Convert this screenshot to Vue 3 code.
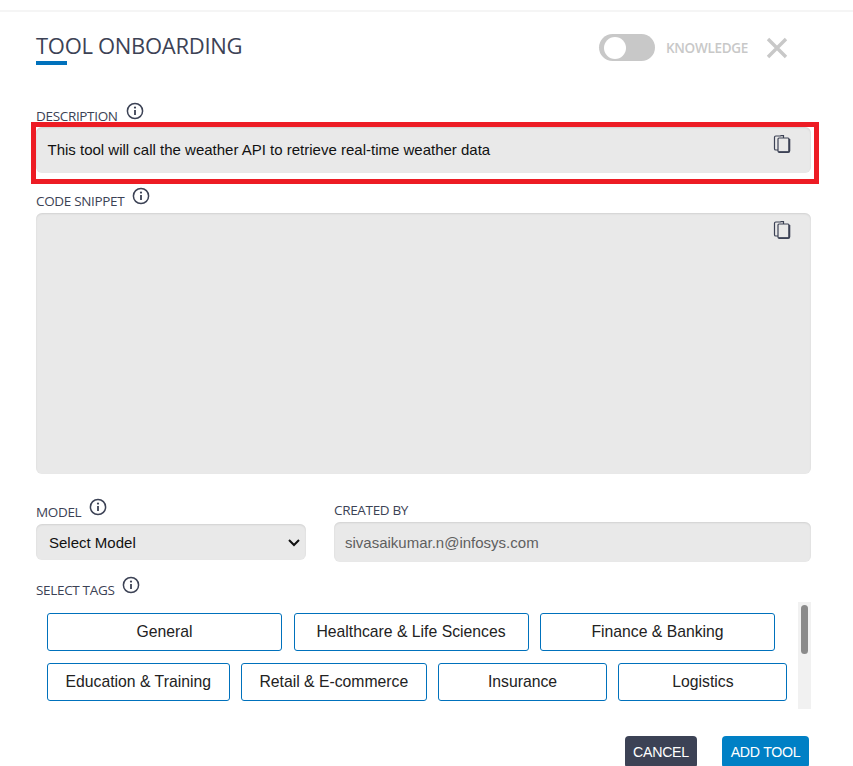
<template>
  <div class="modal">
    <div class="head">
      <h2 class="title">TOOL ONBOARDING</h2>
      <div class="head-right">
        <span class="toggle"><span class="knob"></span></span>
        <span class="knowledge">KNOWLEDGE</span>
        <svg class="close" width="22" height="22" viewBox="0 0 22 22">
          <path d="M2 2 L20 20 M20 2 L2 20" stroke="#c8c8c8" stroke-width="3.4" fill="none" />
        </svg>
      </div>
    </div>

    <div class="label-row desc-label">
      <span class="label">DESCRIPTION</span>
      <svg class="info" width="18" height="18" viewBox="0 0 18 18">
        <circle cx="9" cy="9" r="7.6" fill="none" stroke="#3c4255" stroke-width="1.5" />
        <rect x="8.1" y="8" width="1.8" height="5" fill="#3c4255" />
        <circle cx="9" cy="5.6" r="1.1" fill="#3c4255" />
      </svg>
    </div>
    <div class="desc-wrap">
      <div class="area desc">
        This tool will call the weather API to retrieve real-time weather data
        <svg class="copy" width="18" height="21" viewBox="0 0 18 21">
          <path d="M5 17 H2.8 Q1.5 17 1.5 15.7 V4.3 Q1.5 3 2.8 3 H8 M7.5 2.6 H10.5 V5" fill="none" stroke="#3c4255" stroke-width="1.2" />
          <rect x="5" y="5" width="11" height="14" rx="1" fill="none" stroke="#3c4255" stroke-width="1.2" />
          <path d="M5.5 19.2 H15 Q16.4 19.2 16.4 17.8 V6" fill="none" stroke="#3c4255" stroke-width="1.8" />
        </svg>
      </div>
      <div class="highlight"></div>
    </div>

    <div class="label-row code-label">
      <span class="label">CODE SNIPPET</span>
      <svg class="info" width="18" height="18" viewBox="0 0 18 18">
        <circle cx="9" cy="9" r="7.6" fill="none" stroke="#3c4255" stroke-width="1.5" />
        <rect x="8.1" y="8" width="1.8" height="5" fill="#3c4255" />
        <circle cx="9" cy="5.6" r="1.1" fill="#3c4255" />
      </svg>
    </div>
    <div class="area code">
      <svg class="copy" width="18" height="21" viewBox="0 0 18 21">
        <path d="M5 17 H2.8 Q1.5 17 1.5 15.7 V4.3 Q1.5 3 2.8 3 H8 M7.5 2.6 H10.5 V5" fill="none" stroke="#3c4255" stroke-width="1.2" />
        <rect x="5" y="5" width="11" height="14" rx="1" fill="none" stroke="#3c4255" stroke-width="1.2" />
        <path d="M5.5 19.2 H15 Q16.4 19.2 16.4 17.8 V6" fill="none" stroke="#3c4255" stroke-width="1.8" />
      </svg>
    </div>

    <div class="two-col">
      <div class="col-model">
        <div class="label-row model-label">
          <span class="label">MODEL</span>
          <svg class="info" width="18" height="18" viewBox="0 0 18 18">
            <circle cx="9" cy="9" r="7.6" fill="none" stroke="#3c4255" stroke-width="1.5" />
            <rect x="8.1" y="8" width="1.8" height="5" fill="#3c4255" />
            <circle cx="9" cy="5.6" r="1.1" fill="#3c4255" />
          </svg>
        </div>
        <div class="select">
          <span>Select Model</span>
          <svg width="14" height="9" viewBox="0 0 14 9">
            <path d="M2 2 L7 7 L12 2" fill="none" stroke="#111" stroke-width="2" />
          </svg>
        </div>
      </div>
      <div class="col-created">
        <div class="label created-label">CREATED BY</div>
        <div class="input">sivasaikumar.n@infosys.com</div>
      </div>
    </div>

    <div class="label-row tags-label">
      <span class="label">SELECT TAGS</span>
      <svg class="info" width="18" height="18" viewBox="0 0 18 18">
        <circle cx="9" cy="9" r="7.6" fill="none" stroke="#3c4255" stroke-width="1.5" />
        <rect x="8.1" y="8" width="1.8" height="5" fill="#3c4255" />
        <circle cx="9" cy="5.6" r="1.1" fill="#3c4255" />
      </svg>
    </div>
    <div class="tags">
      <div class="tag-rows">
        <div v-for="(row, i) in tagRows" :key="i" class="tag-row">
          <button v-for="t in row" :key="t.name" class="tag" :style="{ width: t.w + 'px' }">{{ t.name }}</button>
        </div>
      </div>
      <div class="track"><div class="thumb"></div></div>
    </div>

    <div class="actions">
      <button class="btn cancel">CANCEL</button>
      <button class="btn add">ADD TOOL</button>
    </div>
  </div>
</template>

<script setup>
const tagRows = [
  [
    { name: 'General', w: 235 },
    { name: 'Healthcare & Life Sciences', w: 235 },
    { name: 'Finance & Banking', w: 235 },
  ],
  [
    { name: 'Education & Training', w: 182.5 },
    { name: 'Retail & E-commerce', w: 185.7 },
    { name: 'Insurance', w: 168.7 },
    { name: 'Logistics', w: 169 },
  ],
]
</script>

<style>
html,
body {
  margin: 0;
  background: #fff;
  overflow: hidden;
}
</style>

<style scoped>
.modal {
  box-sizing: border-box;
  width: 853px;
  height: 766px;
  overflow: hidden;
  padding: 0 42px 0 36px;
  background: #fff;
  position: relative;
  font-family: 'Liberation Sans', Arial, sans-serif;
}

.modal::before {
  content: '';
  display: block;
  height: 2px;
  margin: 0 -42px 0 -36px;
  position: relative;
  top: 10px;
  background: #f5f5f5;
}

.head {
  display: flex;
  justify-content: space-between;
  align-items: flex-start;
  height: 96px;
}

.title {
  margin: 28px 0 0;
  font-family: 'Open Sans', sans-serif;
  font-weight: 400;
  font-size: 22px;
  line-height: 30px;
  color: #3c4255;
  letter-spacing: -0.3px;
}

.title::after {
  content: '';
  display: block;
  width: 31px;
  height: 4px;
  margin-top: 1px;
  background: #0071bc;
}

.head-right {
  display: flex;
  align-items: center;
  margin-top: 32px;
  margin-right: 23px;
}

.toggle {
  display: block;
  width: 56px;
  height: 27px;
  border-radius: 14px;
  background: #c8c8c8;
  position: relative;
}

.knob {
  position: absolute;
  left: 5px;
  top: 2.5px;
  width: 22px;
  height: 22px;
  border-radius: 50%;
  background: #fff;
}

.knowledge {
  margin-left: 11px;
  font-family: 'Open Sans', sans-serif;
  font-weight: 600;
  font-size: 13.5px;
  letter-spacing: -0.3px;
  color: #c8c8c8;
}

.close {
  margin-left: 18px;
}

.label-row {
  display: flex;
  align-items: flex-start;
  gap: 8px;
}

.label {
  font-family: 'Open Sans', sans-serif;
  font-size: 13.5px;
  line-height: 18px;
  color: #3c4255;
  letter-spacing: -0.33px;
}

.info {
  margin-top: -5px;
}

.desc-label {
  height: 29px;
  padding-top: 9px;
  box-sizing: border-box;
}

.desc-wrap {
  position: relative;
}

.area {
  position: relative;
  box-sizing: border-box;
  background: #e9e9e9;
  border-radius: 6px;
  box-shadow: inset 0 1px 2px rgba(0, 0, 0, 0.1);
  font-size: 15px;
  color: #111;
}

.desc {
  height: 46px;
  padding: 14px 11.5px;
  line-height: 18px;
}

.code {
  height: 261px;
}

.copy {
  position: absolute;
  right: 20px;
  top: 6px;
}

.highlight {
  position: absolute;
  left: -5px;
  right: -8px;
  top: -5px;
  bottom: -11px;
  border: 5px solid #ed1c24;
  pointer-events: none;
}

.code-label {
  height: 40px;
  padding-top: 19px;
  box-sizing: border-box;
}

.two-col {
  display: flex;
  gap: 28px;
  margin-top: 24px;
}

.col-model {
  width: 270px;
}

.col-created {
  flex: 1;
}

.model-label {
  height: 26px;
  padding-top: 5px;
  box-sizing: border-box;
}

.select {
  box-sizing: border-box;
  height: 36px;
  padding: 0 5px 0 13px;
  display: flex;
  align-items: center;
  justify-content: space-between;
  background: #e9e9e9;
  border-radius: 6px;
  box-shadow: inset 0 1px 2px rgba(0, 0, 0, 0.1);
  font-size: 15px;
  color: #111;
}

.created-label {
  height: 24px;
  padding-top: 3px;
  box-sizing: border-box;
}

.input {
  box-sizing: border-box;
  height: 40px;
  padding: 0 11px;
  display: flex;
  align-items: center;
  background: #e9e9e9;
  border-radius: 6px;
  box-shadow: inset 0 1px 2px rgba(0, 0, 0, 0.1);
  font-size: 15px;
  color: #5f5f5f;
}

.tags-label {
  height: 40px;
  padding-top: 19px;
  box-sizing: border-box;
}

.tags {
  display: flex;
  justify-content: space-between;
  height: 107px;
}

.tag-rows {
  padding: 11px 0 0 11px;
  display: flex;
  flex-direction: column;
  gap: 12px;
}

.tag-row {
  display: flex;
  gap: 11.5px;
}

.tag {
  box-sizing: border-box;
  height: 38px;
  padding: 0;
  background: #fff;
  border: 1px solid #0071bc;
  border-radius: 3px;
  font-family: 'Liberation Sans', Arial, sans-serif;
  font-size: 15.75px;
  color: #222;
}

.track {
  width: 13px;
  background: #f1f1f1;
  padding: 3px;
  box-sizing: border-box;
}

.thumb {
  height: 49px;
  width: 7px;
  border-radius: 4px;
  background: #8a8a8a;
}

.actions {
  display: flex;
  justify-content: flex-end;
  gap: 25px;
  margin-top: 27px;
  padding-right: 2px;
}

.btn {
  height: 32px;
  border: none;
  border-radius: 4px;
  padding: 0;
  font-family: 'Liberation Sans', Arial, sans-serif;
  font-size: 14.2px;
  letter-spacing: -0.3px;
  color: #fff;
}

.cancel {
  width: 72px;
  background: #3c4255;
}

.add {
  width: 87px;
  background: #0080c5;
}
</style>
